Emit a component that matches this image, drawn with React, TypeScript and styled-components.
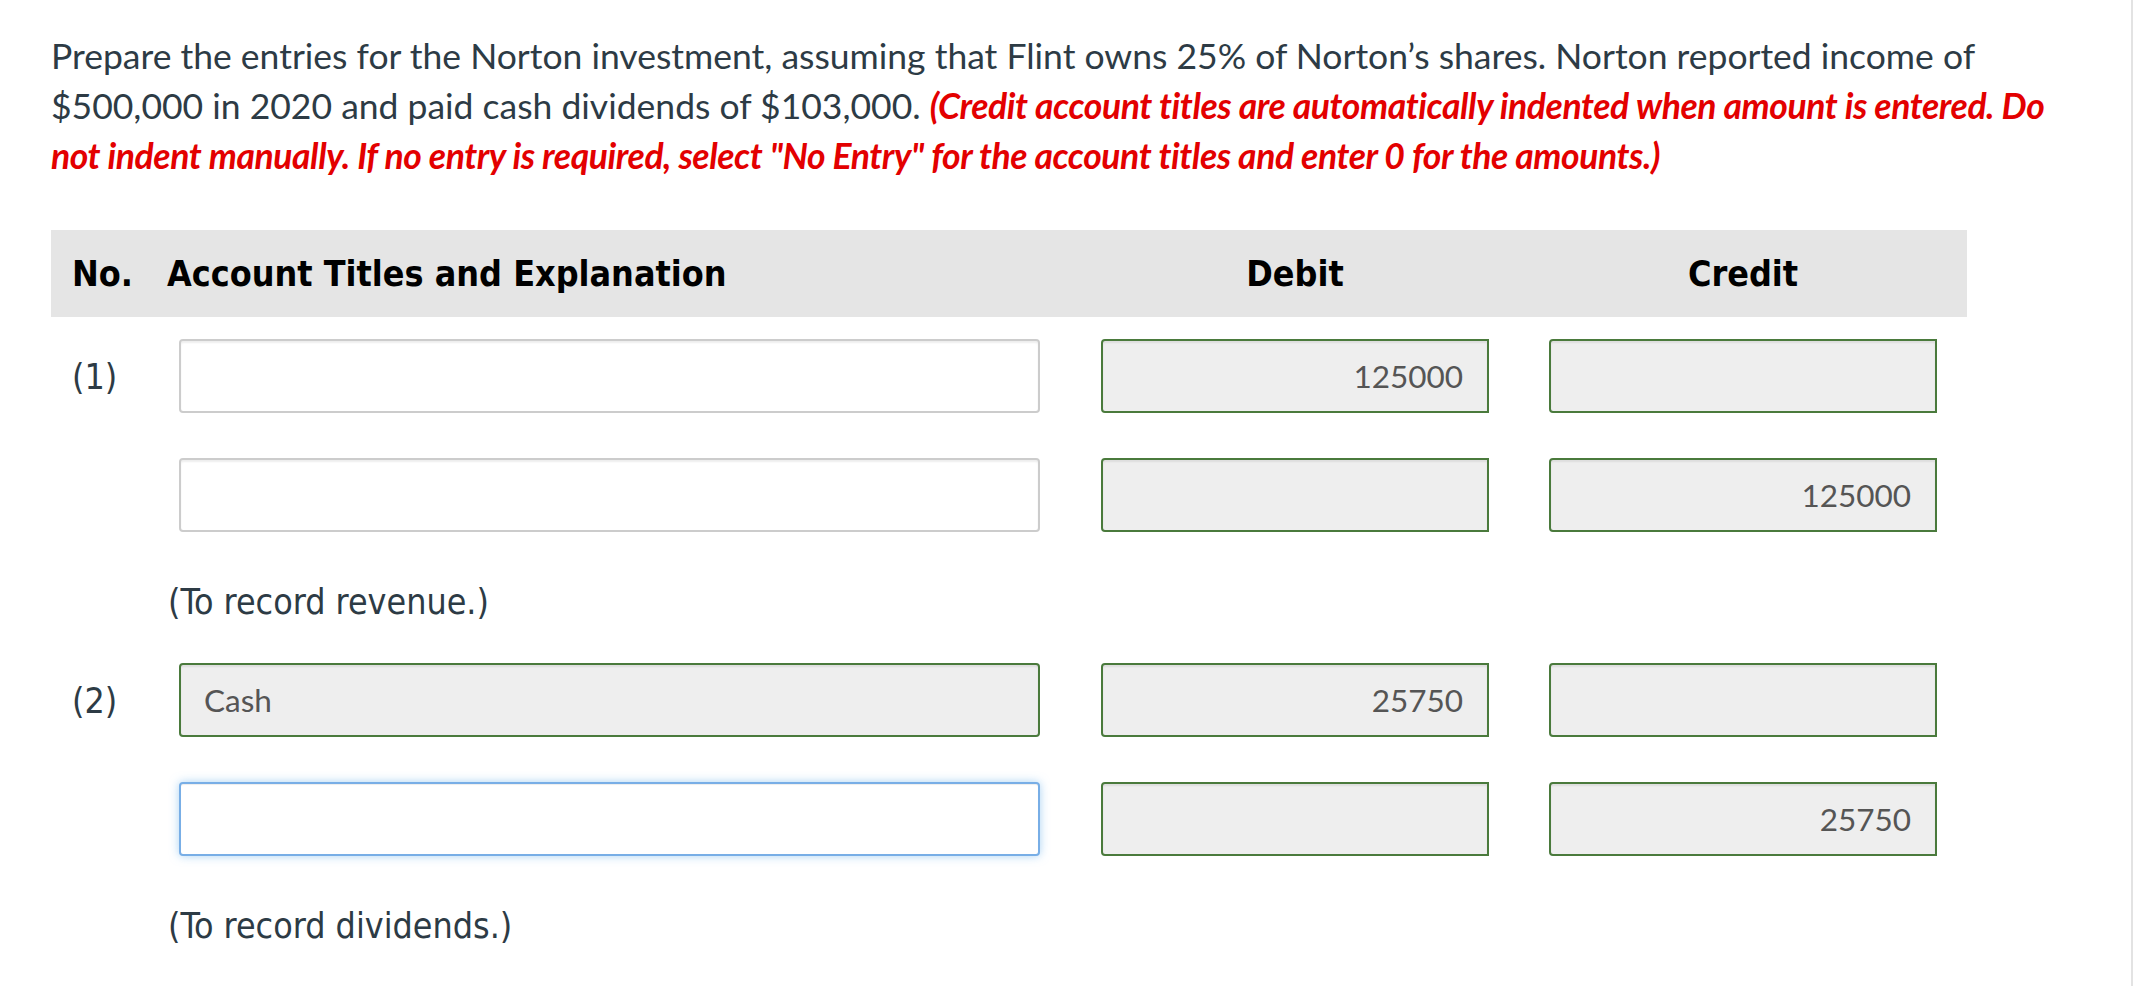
import styled, { createGlobalStyle } from 'styled-components';

const GlobalStyle = createGlobalStyle`
  html, body {
    margin: 0;
    padding: 0;
    background: #fff;
  }
  body {
    font-family: Lato, "Noto Sans", sans-serif;
    color: #2d3b45;
  }
`

const Page = styled.div`
  width: 2133px;
  min-height: 986px;
  box-sizing: border-box;
  padding: 31px 0 0 51px;
  border-right: 2px solid #e3e3e3;
`

const Question = styled.p`
  margin: 0;
  width: 2070px;
  font-family: Lato, sans-serif;
  font-size: 35.5px;
  line-height: 50px;
  color: #2d3b45;
  white-space: nowrap;
`

const Hint = styled.span`
  color: #e30000;
  font-weight: 700;
  font-style: italic;
  letter-spacing: -0.42px;
`

const Table = styled.div`
  margin-top: 49px;
  width: 1916px;
`

const Row = styled.div`
  display: grid;
  grid-template-columns: 116px 904px 448px 448px;
  align-items: center;
`

const HeadRow = styled(Row)`
  height: 87px;
  background: #e5e5e5;
  margin-bottom: 22px;
`

const HeadCell = styled.div<{ $center?: boolean; $pad?: number }>`
  font-family: "DejaVu Sans Condensed", "DejaVu Sans", sans-serif;
  font-stretch: semi-condensed;
  font-weight: 700;
  font-size: 35.6px;
  color: #000;
  text-align: ${p => (p.$center ? 'center' : 'left')};
  padding-left: ${p => p.$pad ?? 0}px;
`

const EntryRow = styled(Row)`
  height: 74px;
  margin-bottom: 45px;
`

const NoteRow = styled(Row)`
  height: 41px;
  padding-top: 8px;
  box-sizing: border-box;
  margin-bottom: 45px;
  align-items: start;
`

const Label = styled.div<{ $pad?: number }>`
  font-family: "DejaVu Sans Condensed", "DejaVu Sans", sans-serif;
  font-stretch: semi-condensed;
  font-size: 35.5px;
  line-height: 33px;
  color: #2d3b45;
  padding-left: ${p => p.$pad ?? 0}px;
  white-space: nowrap;
`

const Note = styled(Label)`
  grid-column: 2 / 5;
`

const AccountCell = styled.div`
  padding: 0 31px 0 12px;
`

const AmountCell = styled.div`
  padding: 0 30px;
`

type Variant = 'plain' | 'filled' | 'focused';

const Field = styled.input<{ $variant: Variant; $right?: boolean; $square?: boolean }>`
  display: block;
  width: 100%;
  height: 74px;
  box-sizing: border-box;
  margin: 0;
  padding: 0 24px 0 23px;
  font-family: Lato, sans-serif;
  font-size: 31.5px;
  color: #555;
  text-align: ${p => (p.$right ? 'right' : 'left')};
  outline: none;
  border-radius: ${p => (p.$square ? '4px 0 0 4px' : '4px')};
  border: 2px solid
    ${p => (p.$variant === 'filled' ? '#4a7a3c' : p.$variant === 'focused' ? '#78aee6' : '#cccccc')};
  background: ${p => (p.$variant === 'filled' ? '#eeeeee' : '#fff')};
  box-shadow: ${p =>
    p.$variant === 'focused'
      ? 'inset 0 1px 1px rgba(0,0,0,.075), 0 0 10px rgba(102,175,233,.55)'
      : 'inset 0 2px 2px rgba(0,0,0,.07)'};
`

type Entry = {
  no?: string;
  account: string;
  accountVariant: Variant;
  debit: string;
  credit: string;
};

const groups: { entries: Entry[]; note: string }[] = [
  {
    entries: [
      { no: '(1)', account: '', accountVariant: 'plain', debit: '125000', credit: '' },
      { account: '', accountVariant: 'plain', debit: '', credit: '125000' },
    ],
    note: '(To record revenue.)',
  },
  {
    entries: [
      { no: '(2)', account: 'Cash', accountVariant: 'filled', debit: '25750', credit: '' },
      { account: '', accountVariant: 'focused', debit: '', credit: '25750' },
    ],
    note: '(To record dividends.)',
  },
];

const App = () => {
  return (
    <>
      <GlobalStyle />
      <Page>
        <Question>
          Prepare the entries for the Norton investment, assuming that Flint owns 25% of Norton’s shares. Norton
          reported income of
          <br />
          $500,000 in 2020 and paid cash dividends of $103,000.{' '}
          <Hint>
            (Credit account titles are automatically indented when amount is entered. Do
            <br />
            not indent manually. If no entry is required, select "No Entry" for the account titles and enter 0 for the
            amounts.)
          </Hint>
        </Question>

        <Table>
          <HeadRow>
            <HeadCell $pad={21}>No.</HeadCell>
            <HeadCell>Account Titles and Explanation</HeadCell>
            <HeadCell $center>Debit</HeadCell>
            <HeadCell $center>Credit</HeadCell>
          </HeadRow>

          {groups.map((g, gi) => (
            <div key={gi}>
              {g.entries.map((e, ei) => (
                <EntryRow key={ei}>
                  <Label $pad={21}>{e.no ?? ''}</Label>
                  <AccountCell>
                    <Field $variant={e.accountVariant} defaultValue={e.account} autoFocus={e.accountVariant === 'focused'} />
                  </AccountCell>
                  <AmountCell>
                    <Field $variant="filled" $right $square defaultValue={e.debit} readOnly />
                  </AmountCell>
                  <AmountCell>
                    <Field $variant="filled" $right $square defaultValue={e.credit} readOnly />
                  </AmountCell>
                </EntryRow>
              ))}
              <NoteRow>
                <Note $pad={1}>{g.note}</Note>
              </NoteRow>
            </div>
          ))}
        </Table>
      </Page>
    </>
  )
}

export default App;
